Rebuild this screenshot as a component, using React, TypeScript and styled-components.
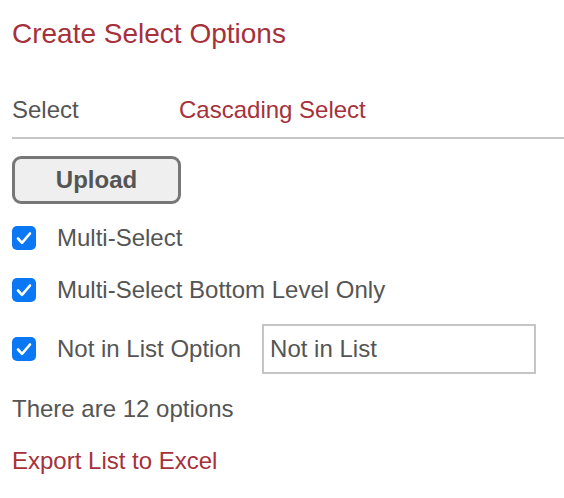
import React from "react";
import styled, { createGlobalStyle } from "styled-components";

const GlobalStyle = createGlobalStyle`
  html, body {
    margin: 0;
    padding: 0;
    background: #ffffff;
  }
  body {
    font-family: "Liberation Sans", Arial, sans-serif;
  }
`;

const Page = styled.div`
  width: 564px;
  height: 498px;
  box-sizing: border-box;
  padding: 18px 0 0 12px;
  display: flex;
  flex-direction: column;
  color: #555555;
  font-size: 24px;
  line-height: 28px;
`;

const Title = styled.div`
  font-size: 28px;
  line-height: 32px;
  color: #a6313b;
`;

const SelectRow = styled.div`
  margin-top: 46px;
  padding-bottom: 13px;
  border-bottom: 2px solid #c6c6c6;
  display: grid;
  grid-template-columns: 167px 1fr;
`;

const Label = styled.span`
  color: #555555;
`;

const LinkText = styled.span`
  color: #a6313b;
  cursor: pointer;
`;

const UploadButton = styled.button`
  margin-top: 17px;
  width: 169px;
  height: 48px;
  box-sizing: border-box;
  border: 3px solid #777777;
  border-radius: 9px;
  background: #efefef;
  color: #555555;
  font-family: "Liberation Sans", Arial, sans-serif;
  font-size: 24px;
  font-weight: bold;
  padding: 0;
  cursor: pointer;
`;

const OptionRow = styled.label<{ $top: number; $height: number }>`
  margin-top: ${(p) => p.$top}px;
  height: ${(p) => p.$height}px;
  display: flex;
  align-items: center;
  gap: 21px;
`;

const CheckBox = styled.span`
  width: 24px;
  height: 24px;
  flex: none;
  border-radius: 5px;
  background: #0a78f5;
  display: flex;
  align-items: center;
  justify-content: center;
`;

const TextInput = styled.input`
  width: 274px;
  height: 50px;
  box-sizing: border-box;
  border: 2px solid #c4c4c4;
  border-radius: 0;
  padding: 0 0 0 6px;
  font-family: "Liberation Sans", Arial, sans-serif;
  font-size: 24px;
  color: #555555;
  outline: none;
`;

const Info = styled.div<{ $top: number }>`
  margin-top: ${(p) => p.$top}px;
`;

const Check = () => (
  <CheckBox>
    <svg width="24" height="24" viewBox="0 0 24 24" fill="none">
      <path
        d="M6 12.5 L10 16.8 L18 7.5"
        stroke="#ffffff"
        strokeWidth="2.6"
        strokeLinecap="round"
        strokeLinejoin="round"
      />
    </svg>
  </CheckBox>
);

const App = () => {
  const count = 12;
  return (
    <Page>
      <GlobalStyle />
      <Title>Create Select Options</Title>
      <SelectRow>
        <Label>Select</Label>
        <LinkText>Cascading Select</LinkText>
      </SelectRow>
      <div>
        <UploadButton>Upload</UploadButton>
      </div>
      <OptionRow $top={22} $height={24}>
        <Check />
        <span>Multi-Select</span>
      </OptionRow>
      <OptionRow $top={28} $height={24}>
        <Check />
        <span>Multi-Select Bottom Level Only</span>
      </OptionRow>
      <OptionRow $top={22} $height={50}>
        <Check />
        <span>Not in List Option</span>
        <TextInput defaultValue="Not in List" />
      </OptionRow>
      <Info $top={21}>There are {count} options</Info>
      <Info $top={24}>
        <LinkText>Export List to Excel</LinkText>
      </Info>
    </Page>
  );
};

export default App;
